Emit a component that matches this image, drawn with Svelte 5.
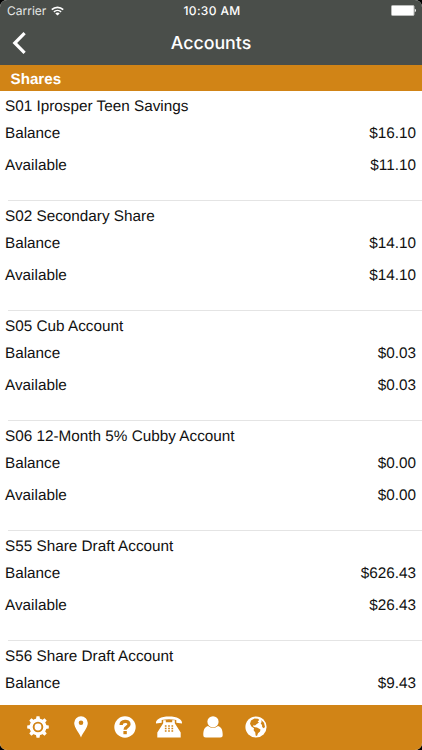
<script>
    // Accounts listed under the Shares heading
    let accounts = $state([
        { name: 'S01 Iprosper Teen Savings', balance: '$16.10', available: '$11.10' },
        { name: 'S02 Secondary Share', balance: '$14.10', available: '$14.10' },
        { name: 'S05 Cub Account', balance: '$0.03', available: '$0.03' },
        { name: 'S06 12-Month 5% Cubby Account', balance: '$0.00', available: '$0.00' },
        { name: 'S55 Share Draft Account', balance: '$626.43', available: '$26.43' },
        { name: 'S56 Share Draft Account', balance: '$9.43' },
    ]);

    // Teeth of the settings gear, in degrees
    const teeth = [0, 45, 90, 135, 180, 225, 270, 315];
</script>

<div class="screen">
    <header>
        <div class="status-bar">
            <div class="carrier">
                <span>Carrier</span>
                <svg width="13" height="10" viewBox="0 0 13 10" fill="none" stroke="#fff">
                    <path d="M.8 3.7a8.2 8.2 0 0 1 11.4 0" stroke-width="1.7" />
                    <path d="M2.9 5.9a5.2 5.2 0 0 1 7.2 0" stroke-width="1.6" />
                    <path d="M6.5 9.6 4.3 7.5a2.9 2.9 0 0 1 4.4 0z" fill="#fff" stroke="none" />
                </svg>
            </div>
            <span class="time">10:30 AM</span>
            <div class="battery">
                <svg width="26" height="11" viewBox="0 0 26 11">
                    <rect x=".5" y=".5" width="22.5" height="10" rx="1" fill="#fff" stroke="#b9bbb9" />
                    <path d="M23.8 3.8c1.5.3 1.5 3.1 0 3.4z" fill="#fff" />
                </svg>
            </div>
        </div>
        <div class="nav-bar">
            <button aria-label="Back">
                <svg width="14" height="22" viewBox="0 0 14 22" fill="none" stroke="#fff" stroke-width="3.2">
                    <path d="M12.6 1.2 2.8 11l9.8 9.8" />
                </svg>
            </button>
            <h1>Accounts</h1>
        </div>
    </header>

    <h2>Shares</h2>

    <main>
        {#each accounts as account}
            <section>
                <h3>{account.name}</h3>
                <div class="row">
                    <span>Balance</span>
                    <span>{account.balance}</span>
                </div>
                {#if account.available}
                    <div class="row">
                        <span>Available</span>
                        <span>{account.available}</span>
                    </div>
                {/if}
            </section>
        {/each}
    </main>

    <footer>
        <button aria-label="Settings">
            <svg width="28" height="24" viewBox="-14 -12 28 24">
                <circle r="6.9" fill="none" stroke="#fff" stroke-width="3.2" />
                <circle r="3.4" fill="#fff" />
                {#each teeth as angle}
                    <path d="M-2.1-7.5-1.5-10.8h3l.6 3.3z" fill="#fff" transform="rotate({angle})" />
                {/each}
            </svg>
        </button>
        <button aria-label="Locations">
            <svg width="28" height="24" viewBox="-14 -12 28 24" fill="#fff">
                <path fill-rule="evenodd" d="M0 10.5C-1.5 6-6.8 1-6.8-4a6.8 6.8 0 0 1 13.6 0C6.8 1 1.5 6 0 10.5zM0-6.6a2.3 2.3 0 1 0 0 4.6 2.3 2.3 0 0 0 0-4.6z" />
            </svg>
        </button>
        <button aria-label="Help">
            <svg width="28" height="24" viewBox="-14 -12 28 24">
                <circle r="10.7" fill="#fff" />
                <path d="M-3.9-2.1C-3.9-6.8 4-6.8 4-2.8 4 0 .1-.2.1 2.7" fill="none" stroke="#d18416" stroke-width="3.3" />
                <rect x="-1.6" y="4" width="3.4" height="3.2" fill="#d18416" />
            </svg>
        </button>
        <button aria-label="Call">
            <svg width="28" height="24" viewBox="-14 -12 28 24" fill="#fff">
                <path d="M-13-3.4C-13.7-8-8-10.6 0-10.6S13.7-8 13-3.4L7.3-4.2V-7Q0-8.6-7.3-7v2.8z" />
                <path d="M-5.8-6.8h2.6v2h6.4v-2h2.6v3L11.7 5.5v5h-23.4v-5L-5.8-3.8z" />
                <path d="M-3.3-1.8v6.6M0-1.8v6.6M3.3-1.8v6.6" stroke="#d18416" stroke-width="1.7" stroke-dasharray="1.6 .9" />
            </svg>
        </button>
        <button aria-label="Profile">
            <svg width="28" height="24" viewBox="-14 -12 28 24" fill="#fff">
                <circle cy="-5.2" r="5.6" />
                <path d="M-5-.9Q0 3 5-.9C8.5 0 9.7 3.5 9.7 8q0 2.5-2.5 2.5H-7.2q-2.5 0-2.5-2.5C-9.7 3.5-8.5 0-5-.9z" />
            </svg>
        </button>
        <button aria-label="Website">
            <svg width="28" height="24" viewBox="-14 -12 28 24">
                <circle r="10.6" fill="#fff" />
                <path d="M-5-6.5-1.5-8.5 2-8.3 3.3-7 1.6-5.6 3-4.4.8-3-1-1.4-2.8-1.7-2.8-.4-1 .3 1 .5 4.5 2.4 4 4.5 2 6.3 1 9-.4 8.6-.7 5.4-2.4 3.2-2 1.3-4.6-.4-6-3.2zM5.2-7 8-4.2 9 0 7.6 1.2 6.2 0 6-2 4.7-3.6 5.6-4.9z" fill="#d18416" />
            </svg>
        </button>
    </footer>
</div>

<style>
    :global(body) {
        margin: 0;
        background: #000;
    }

    .screen {
        display: flex;
        flex-direction: column;
        height: 750px;
        overflow: hidden;
        border-radius: 7px;
        background: #fff;
        color: #111;
        font-family: "Liberation Sans", Arial, sans-serif;
        text-rendering: geometricPrecision;
    }

    header {
        height: 65px;
        flex-shrink: 0;
        background: #4a4e4a;
        color: #fff;
        font-family: Inter, sans-serif;
    }

    .status-bar {
        display: grid;
        grid-template-columns: 1fr auto 1fr;
        align-items: center;
        height: 21px;
        padding: 0 5px 0 7px;
        font-size: 12px;
    }

    .carrier {
        display: flex;
        align-items: center;
        gap: 5px;
        color: #e4e5e4;
    }

    .time {
        font-weight: 500;
        letter-spacing: 0.35px;
    }

    .battery {
        display: flex;
        justify-content: flex-end;
    }

    .nav-bar {
        display: grid;
        grid-template-columns: 60px 1fr 60px;
        align-items: center;
        height: 44px;
    }

    .nav-bar button {
        padding-left: 12px;
        text-align: left;
    }

    h1 {
        margin: 0;
        padding-top: 2px;
        font-size: 17.8px;
        font-weight: 500;
        line-height: 22px;
        text-align: center;
    }

    button {
        padding: 0;
        border: none;
        background: none;
        cursor: pointer;
    }

    svg {
        display: block;
    }

    h2 {
        flex-shrink: 0;
        height: 26px;
        margin: 0;
        padding-left: 10.5px;
        background: #d18416;
        color: #fff;
        font-size: 15.2px;
        line-height: 29px;
    }

    main {
        flex: 1;
        min-height: 0;
        overflow: hidden;
    }

    section {
        box-sizing: border-box;
        height: 110px;
        padding: 5px 6px 0 5px;
        background: linear-gradient(#e4e4e4, #e4e4e4) 8px 100% / 100% 1px no-repeat;
        font-size: 15.3px;
    }

    h3 {
        margin: 0;
        font-size: inherit;
        font-weight: 400;
        line-height: 22px;
    }

    .row {
        display: flex;
        justify-content: space-between;
        padding-bottom: 1px;
        line-height: 31px;
    }

    footer {
        display: flex;
        align-items: center;
        flex-shrink: 0;
        box-sizing: border-box;
        gap: 15.8px;
        height: 45px;
        padding: 0 0 1px 23.5px;
        background: #d18416;
    }
</style>
